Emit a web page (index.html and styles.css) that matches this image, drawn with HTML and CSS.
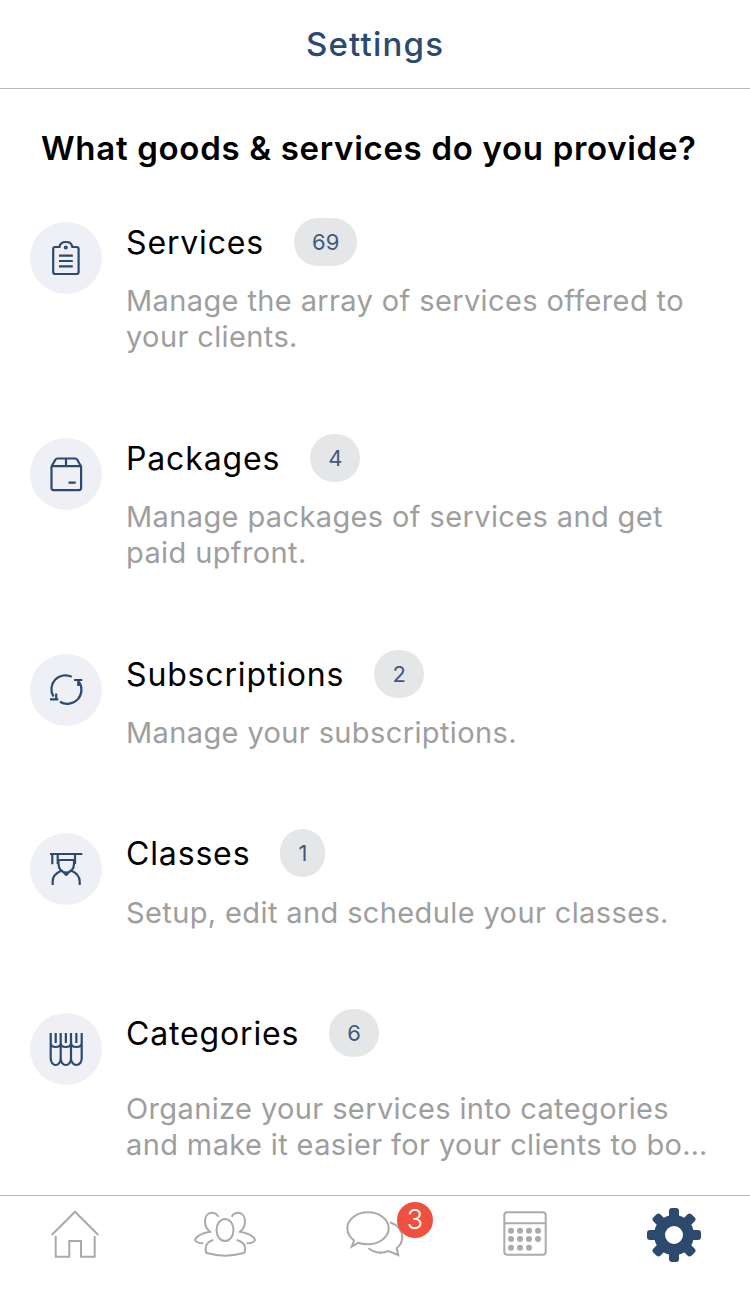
FILE: index.html
```html
<!DOCTYPE html>
<html lang="en">
<head>
  <meta charset="UTF-8">
  <meta name="viewport" content="width=device-width, initial-scale=1.0">
  <title>Settings</title>
  <link rel="stylesheet" href="styles.css">
</head>
<body>
  <div class="page">
    <header class="top"><h1>Settings</h1></header>

    <main class="content">
      <h2 class="question">What goods &amp; services do you provide?</h2>

      <ul class="list">
        <li class="row">
          <span class="ico">
            <svg viewBox="0 0 72 72"><path d="M29.5 25h-4.3a2 2 0 0 0-2 2v23a2 2 0 0 0 2 2h21.4a2 2 0 0 0 2-2V27a2 2 0 0 0-2-2h-4.3c-.4-3-3-5-6.4-5s-6 2-6.4 5z"/><circle cx="35.8" cy="25.6" r=".9"/><path d="M29 33.7h13.8M29 39h13.8M29 44.3h13.8"/></svg>
          </span>
          <div class="body">
            <div class="head"><span class="name">Services</span><span class="pill">69</span></div>
            <p class="desc">Manage the array of services offered to your clients.</p>
          </div>
        </li>
        <li class="row">
          <span class="ico">
            <svg viewBox="0 0 72 72"><path d="M21.5 28.5v21.6a2 2 0 0 0 2 2h25.6a2 2 0 0 0 2-2V28.5l-4-7a2 2 0 0 0-1.700-1H27.200a2 2 0 0 0-1.700 1zM21.500 28.200h29.600M36 20.500v7.700M38.500 44.700h7.300"/></svg>
          </span>
          <div class="body">
            <div class="head"><span class="name">Packages</span><span class="pill">4</span></div>
            <p class="desc">Manage packages of services and get paid upfront.</p>
          </div>
        </li>
        <li class="row row-sub">
          <span class="ico">
            <svg viewBox="0 0 72 72"><path d="M41.700 22.800A14 14 0 0 0 23.500 42.700M20 45.300h8.300M26.200 39.500v5.800M30 47.700A14 14 0 0 0 48.300 27M44 26h8.300M48.300 26v6"/></svg>
          </span>
          <div class="body">
            <div class="head"><span class="name">Subscriptions</span><span class="pill">2</span></div>
            <p class="desc">Manage your subscriptions.</p>
          </div>
        </li>
        <li class="row row-class">
          <span class="ico">
            <svg viewBox="0 0 72 72"><path d="M20 21h32.300M22.300 21v10.300M27.700 21v10M45 21v10M27.700 27h17.300M28.500 27v4c0 5 3.500 8.700 7.700 8.700s7.800-3.700 7.800-8.700v-4M22.700 52v-4c0-6 4.500-8.500 9-10.500l4.500 4.500 4.500-4.500c5 2 9 4.500 9 11v3.500"/></svg>
          </span>
          <div class="body">
            <div class="head"><span class="name">Classes</span><span class="pill">1</span></div>
            <p class="desc">Setup, edit and schedule your classes.</p>
          </div>
        </li>
        <li class="row row-cat">
          <span class="ico">
            <svg viewBox="0 0 72 72"><path d="M20.700 20v25.500c0 3.500 2.300 6.500 5 6.500s5-3 5-6.500c0 3.500 2.300 6.500 5.150 6.500s5.150-3 5.150-6.500c0 3.500 2.300 6.500 5.350 6.500s5.350-3 5.350-6.500V20M20.700 30c0 3 2.300 4 5 4s5-1 5-4c0 3 2.300 4 5.150 4S41 33 41 30c0 3 2.300 4 5.350 4s5.350-1 5.350-4M25.700 20v10M30.700 20v25.500M35.850 20v10M41 20v25.500M46.350 20v10"/></svg>
          </span>
          <div class="body">
            <div class="head"><span class="name">Categories</span><span class="pill">6</span></div>
            <p class="desc">Organize your services into categories and make it easier for your clients to bo…</p>
          </div>
        </li>
      </ul>
    </main>

    <nav class="tabs">
      <a class="tab" href="#">
        <svg viewBox="0 0 64 52"><path d="M8.700 26 32 2.700 55.300 26M12.700 27v20.700h13.600V32h11.700v15.700h13.700V27"/></svg>
      </a>
      <a class="tab" href="#">
        <svg viewBox="0 0 64 52"><ellipse cx="32" cy="21" rx="8.500" ry="11"/><path d="M20.300 31C15 32.500 12.700 35 12.700 39.300V42c0 1.500.5 2 2 2.300 11 3 24 3 35 0 1.500-.3 2.300-.8 2.300-2.300v-2.700C52 35 49 32.500 43.700 31"/><path d="M25.300 7.700C24 5 21.500 3.700 18.700 3.700 14.500 3.700 12 7.500 12 12.700c0 4 2 7.500 5 10-6 1-13.300 3-15 8.300 1 2.500 5 3.300 8.300 3.300"/><path d="M38.700 7.700C40 5 42.500 3.700 45.300 3.700 49.500 3.700 52 7.500 52 12.700c0 4-2 7.500-5 10 6 1 13.300 3 15 8.300-1 2.500-5 3.300-8.300 3.300"/></svg>
      </a>
      <a class="tab tab-chat" href="#">
        <svg viewBox="0 0 64 52"><path d="M11 31.500 8.700 37.700 15 33.800C18 35 21 35.300 25 35.300 36.500 35.300 45.700 28 45.700 19.300 45.700 10.500 36.500 3.300 25 3.300 13.500 3.300 4.300 10.500 4.300 19.300 4.300 24 7 28.500 11 31.500z"/><path d="M47 13.300C55 16 59.300 22 59.300 28 59.300 32.500 57 36.500 53.700 39.300L55.300 46 45.300 42C39 44.800 31 44 25.300 39.300"/></svg>
        <span class="badge">3</span>
      </a>
      <a class="tab" href="#">
        <svg viewBox="0 0 64 52"><rect x="11.300" y="3.300" width="41.400" height="42.400" rx="3"/><path d="M11.300 14.300h41.400"/><g class="dots"><circle cx="18" cy="21.700" r="3"/><circle cx="27" cy="21.700" r="3"/><circle cx="36" cy="21.700" r="3"/><circle cx="45" cy="21.700" r="3"/><circle cx="18" cy="30" r="3"/><circle cx="27" cy="30" r="3"/><circle cx="36" cy="30" r="3"/><circle cx="45" cy="30" r="3"/><circle cx="18" cy="38.700" r="3"/><circle cx="27" cy="38.700" r="3"/><circle cx="36" cy="38.700" r="3"/></g></svg>
      </a>
      <a class="tab tab-on" href="#">
        <svg viewBox="0 0 64 52"><circle class="gear-ring" cx="31" cy="26" r="14.500"/><g class="gear-teeth"><rect x="26" y="-1" width="10" height="12" rx="3"/><rect x="26" y="41" width="10" height="12" rx="3"/><rect x="4" y="21" width="12" height="10" rx="3"/><rect x="46" y="21" width="12" height="10" rx="3"/><rect x="26" y="-1" width="10" height="12" rx="3" transform="rotate(45 31 26)"/><rect x="26" y="41" width="10" height="12" rx="3" transform="rotate(45 31 26)"/><rect x="4" y="21" width="12" height="10" rx="3" transform="rotate(45 31 26)"/><rect x="46" y="21" width="12" height="10" rx="3" transform="rotate(45 31 26)"/></g></svg>
      </a>
    </nav>
  </div>
</body>
</html>
```

FILE: styles.css
```css
*{margin: 0;padding: 0;box-sizing: border-box;}
li{list-style-type: none;}
body{font-family: Inter, "Noto Sans", "Liberation Sans", sans-serif;background: #fff;}

.page{display: flex;flex-direction: column;height: 1294px;overflow: hidden;}

.top{height: 89px;border-bottom: 1px solid #b8b8b8;display: flex;align-items: center;justify-content: center;}
.top h1{font-size: 33px;font-weight: 500;color: #2c4a6e;letter-spacing: 1.2px;}

.content{flex: 1;min-height: 0;overflow: hidden;}
.question{font-size: 33px;font-weight: 600;color: #000;padding-left: 41px;margin-top: 39px;line-height: 40px;letter-spacing: .69px;white-space: nowrap;}

.list{margin-top: 50px;}
.row{display: flex;padding: 0 40px 0 30px;margin-bottom: 79px;}
.row-sub{margin-bottom: 78px;}
.row-class{margin-bottom: 78px;}
.row-class .desc{margin-top: 18px;}
.row-cat{padding-right: 30px;}
.row-cat .desc{margin-top: 34px;}

.ico{flex: none;width: 72px;height: 72px;margin-top: 4px;margin-right: 24px;border-radius: 50%;background: #eff0f5;}
.ico svg{display: block;width: 72px;height: 72px;fill: none;stroke: #2c4a6e;stroke-width: 2.2;stroke-linejoin: round;}

.body{flex: 1;min-width: 0;}
.head{display: flex;align-items: center;height: 48px;}
.name{font-size: 32px;color: #000;letter-spacing: .85px;}
.pill{margin-left: 30px;height: 48px;line-height: 48px;padding: 0 18px;border-radius: 24px;background: #e5e6e8;color: #3f5a7a;font-size: 22px;}

.desc{margin-top: 17px;font-size: 29px;line-height: 36px;color: #9e9e9e;letter-spacing: .38px;}

.tabs{flex: none;height: 99px;border-top: 1px solid #b8b8b8;display: flex;}
.tab{position: relative;flex: 1;display: flex;justify-content: center;padding-top: 13px;}
.tab svg{display: block;width: 64px;height: 52px;overflow: visible;fill: none;stroke: #aaa;stroke-width: 2;}
.tab .dots{fill: #aaa;stroke: none;}
.tab-on .gear-ring{stroke: #2c4a6e;stroke-width: 11;}
.tab-on .gear-teeth{fill: #2c4a6e;stroke: none;}

.badge{position: absolute;left: 97px;top: 6px;width: 36px;height: 36px;border-radius: 50%;background: #ef5040;color: #fff;font-size: 27px;font-weight: 300;line-height: 36px;text-align: center;}
```
